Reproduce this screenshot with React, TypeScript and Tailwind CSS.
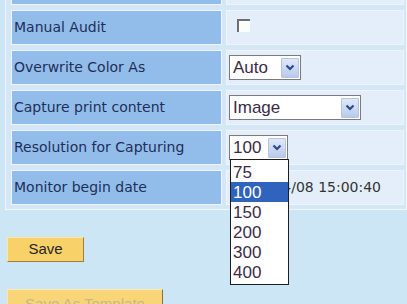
import React from "react";

const labelFont = { fontFamily: '"DejaVu Sans", Verdana, sans-serif' };
const arial = { fontFamily: '"Liberation Sans", Arial, sans-serif' };

const Chevron = () => (
  <svg width="10" height="7" viewBox="0 0 10 7">
    <path d="M1.5 1.5 L5 5 L8.5 1.5" fill="none" stroke="#2b4a8c" strokeWidth="2.2" />
  </svg>
);

const FakeSelect = ({
  value,
  width,
  children,
}: {
  value: string;
  width: string;
  children?: React.ReactNode;
}) => (
  <div
    className={`relative flex h-[25px] items-center border border-[#7b7b7b] bg-white ${width}`}
    style={arial}
  >
    <span className="flex-1 pl-[3px] text-[17px] leading-none text-[#3d2a47]">{value}</span>
    <div className="mr-[1px] flex h-[20px] w-[18px] items-center justify-center rounded-[1px] border border-[#b4c5e4] bg-gradient-to-b from-[#dfe8f7] to-[#b8caec]">
      <Chevron />
    </div>
    {children}
  </div>
);

const Row = ({ label, children }: { label: string; children?: React.ReactNode }) => (
  <>
    <div
      className="flex h-[35px] items-center border border-[#eef5fc] bg-[#92bdeb] pl-[2px] text-[14px] text-[#1f2e57]"
      style={labelFont}
    >
      {label}
    </div>
    <div className="flex h-[35px] items-center border border-[#eef5fc] bg-[#e3eefa] pl-[2px]">
      {children}
    </div>
  </>
);

export default function App() {
  const options = ["75", "100", "150", "200", "300", "400"];
  return (
    <div className="relative h-[304px] w-[407px] overflow-hidden bg-[#cde6f6]">
      <div className="ml-[5px] mt-[-6px] w-[402px] border border-[#eef5fc] bg-[#d4e7f7] pb-[4px] pl-[5px] pr-[2px] pt-[5px]">
        <div className="grid grid-cols-[211px_178px] gap-x-[4px] gap-y-[5px]">
          <div className="h-[5px] border-x border-b border-[#eef5fc] bg-[#92bdeb]" />
          <div className="h-[5px] border-x border-b border-[#eef5fc] bg-[#e3eefa]" />

          <Row label="Manual Audit">
            <div className="ml-[8px] mt-[-4px] h-[13px] w-[13px] border-l-2 border-t-2 border-l-[#6e6e6e] border-t-[#6e6e6e] bg-[#fbfdfb]" />
          </Row>

          <Row label="Overwrite Color As">
            <FakeSelect value="Auto" width="w-[72px]" />
          </Row>

          <Row label="Capture print content">
            <FakeSelect value="Image" width="w-[132px]" />
          </Row>

          <Row label="Resolution for Capturing">
            <FakeSelect value="100" width="w-[59px]">
              <div className="absolute left-[0px] top-[23px] z-10 w-[59px] border border-[#1e1e1e] bg-white py-[2px]">
                {options.map((o) => (
                  <div
                    key={o}
                    className={`flex h-[20px] items-center pl-[2px] text-[17px] leading-none ${
                      o === "100" ? "bg-[#2f63bd] text-white" : "text-[#3d2a47]"
                    }`}
                  >
                    {o}
                  </div>
                ))}
              </div>
            </FakeSelect>
          </Row>

          <Row label="Monitor begin date">
            <span className="pl-[4px] text-[14px] text-[#333333]" style={labelFont}>
              2010/04/08 15:00:40
            </span>
          </Row>
        </div>
      </div>

      <div className="ml-[7px] mt-[27px] flex flex-col items-start gap-[27px]" style={arial}>
        <button className="flex h-[25px] w-[77px] items-center justify-center border border-b-[#9a7f3e] border-l-[#fde7a6] border-r-[#9a7f3e] border-t-[#fde7a6] bg-[#f9d169] text-[15px] text-[#262626]">
          Save
        </button>
        <button className="flex h-[25px] w-[156px] items-start justify-center border border-b-[#9a7f3e] border-l-[#fde7a6] border-r-[#8a7040] border-t-[#fdebb4] bg-[#f8d678] pt-[3px] text-[15px] text-[#c9b68a]">
          Save As Template
        </button>
      </div>
    </div>
  );
}
